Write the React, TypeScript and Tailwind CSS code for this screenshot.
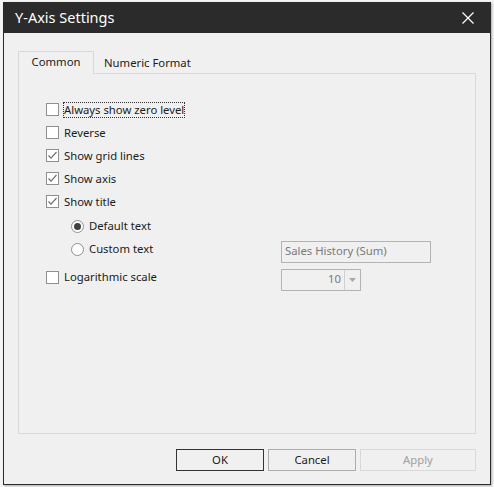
import React from 'react';

const Check = ({ checked }: { checked?: boolean }) => (
  <span className="flex h-[13px] w-[13px] shrink-0 items-center justify-center border border-[#8f8f8f] bg-white">
    {checked && (
      <svg width="11" height="11" viewBox="0 0 11 11">
        <path d="M1.5 5.5 L4 8.2 L9.5 2" fill="none" stroke="#707070" strokeWidth="1.2" />
      </svg>
    )}
  </span>
);

const Radio = ({ checked }: { checked?: boolean }) => (
  <span className="flex h-[13px] w-[13px] shrink-0 items-center justify-center rounded-full border border-[#8f8f8f] bg-white">
    {checked && <span className="h-[7px] w-[7px] rounded-full bg-[#404040]" />}
  </span>
);

const CheckRow = ({
  label,
  checked,
  focused,
}: {
  label: string;
  checked?: boolean;
  focused?: boolean;
}) => (
  <div className="flex h-[23px] items-center gap-[4px]">
    <Check checked={checked} />
    <span
      className={`leading-[14px] ${focused ? 'border border-dotted border-[#333]' : 'border border-transparent'}`}>
      {label}
    </span>
  </div>
);

export default function App() {
  return (
    <div className="h-[487px] w-[494px] bg-[#f4f4f4] pt-[2px] pl-[3px] font-['Segoe_UI','Noto_Sans',sans-serif] text-[11.3px] text-[#1b1b1b]">
      <div className="flex h-[483px] w-[488px] flex-col border border-[#2b2b2b] bg-[#f0f0f0] shadow-[1px_1px_2px_rgba(0,0,0,0.3)]">
        {/* title bar */}
        <div className="flex h-[30px] shrink-0 items-center justify-between bg-[#2b2b2b] pr-[16px] pl-[11px]">
          <span className="text-[14.5px] text-white">Y-Axis Settings</span>
          <svg width="12" height="12" viewBox="0 0 12 12">
            <path d="M0.5 0.5 L11.5 11.5 M11.5 0.5 L0.5 11.5" stroke="#fff" strokeWidth="1.2" />
          </svg>
        </div>

        <div className="flex flex-1 flex-col px-[14px] pt-[18px]">
          {/* tabs */}
          <div className="relative z-10 flex h-[23px] items-end">
            <div className="flex h-[23px] w-[76px] items-center justify-center border border-b-0 border-[#d9d9d9] bg-[#f0f0f0] pb-[1px]">
              Common
            </div>
            <div className="flex h-[21px] items-center px-[10px]">Numeric Format</div>
          </div>

          {/* panel */}
          <div className="-mt-px h-[361px] w-[458px] border border-[#d9d9d9] pt-[24px] pl-[27px]">
            <CheckRow label="Always show zero level" focused />
            <CheckRow label="Reverse" />
            <CheckRow label="Show grid lines" checked />
            <CheckRow label="Show axis" checked />
            <CheckRow label="Show title" checked />

            <div className="mt-[2px] pl-[25px]">
              <div className="flex h-[23px] items-center gap-[5px]">
                <Radio checked />
                <span>Default text</span>
              </div>
              <div className="flex h-[23px] items-center">
                <div className="flex w-[210px] items-center gap-[5px]">
                  <Radio />
                  <span>Custom text</span>
                </div>
                <div className="mt-[4px] flex h-[22px] w-[150px] items-center border border-[#b4b4b4] px-[3px] text-[#7a7a7a]">
                  Sales History (Sum)
                </div>
              </div>
            </div>

            <div className="mt-[5px] flex h-[23px] items-center">
              <div className="flex w-[235px] items-center gap-[5px]">
                <Check />
                <span>Logarithmic scale</span>
              </div>
              <div className="mt-[4px] flex h-[22px] w-[80px] items-stretch border border-[#b4b4b4] text-[#7a7a7a]">
                <div className="flex flex-1 items-center justify-end pr-[3px]">10</div>
                <div className="flex w-[16px] items-center justify-center border-l border-[#cfcfcf]">
                  <svg width="7" height="4" viewBox="0 0 7 4">
                    <path d="M0 0 L7 0 L3.5 4 Z" fill="#a8a8a8" />
                  </svg>
                </div>
              </div>
            </div>
          </div>

          {/* buttons */}
          <div className="mt-[15px] flex justify-end gap-[4px]">
            <button className="h-[22px] w-[88px] border border-[#333] bg-[#f0f0f0]">OK</button>
            <button className="h-[22px] w-[88px] border border-[#adadad] bg-[#f0f0f0]">Cancel</button>
            <button className="h-[22px] w-[116px] border border-[#d9d9d9] bg-[#f0f0f0] text-[#a0a0a0]">
              Apply
            </button>
          </div>
        </div>
      </div>
    </div>
  );
}
